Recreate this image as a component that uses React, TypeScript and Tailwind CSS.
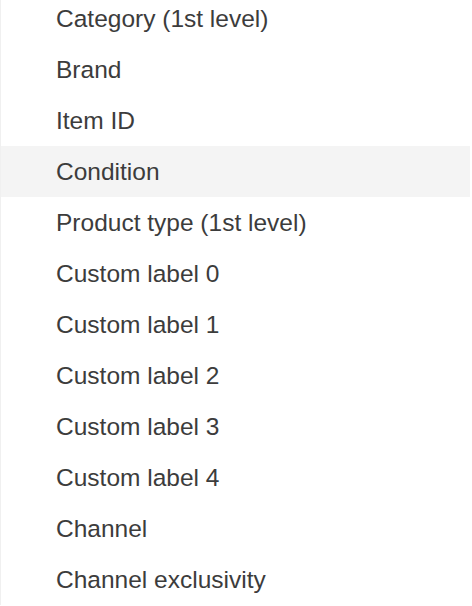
const items = [
  "Category (1st level)",
  "Brand",
  "Item ID",
  "Condition",
  "Product type (1st level)",
  "Custom label 0",
  "Custom label 1",
  "Custom label 2",
  "Custom label 3",
  "Custom label 4",
  "Channel",
  "Channel exclusivity",
]

export default function App() {
  return (
    <div className="h-[606px] w-[472px] overflow-hidden bg-white font-['Liberation_Sans',Arial,sans-serif]">
      <ul className="-mt-[7px] mr-[2px] border-l border-[#f0f0f0]">
        {items.map((item) => (
          <li
            key={item}
            className={`flex h-[51px] items-center pl-[55px] pt-[2px] text-[24.5px] text-[#3c3c3c] ${
              item === "Condition" ? "bg-[#f4f4f4]" : ""
            }`}
          >
            {item}
          </li>
        ))}
      </ul>
    </div>
  )
}
